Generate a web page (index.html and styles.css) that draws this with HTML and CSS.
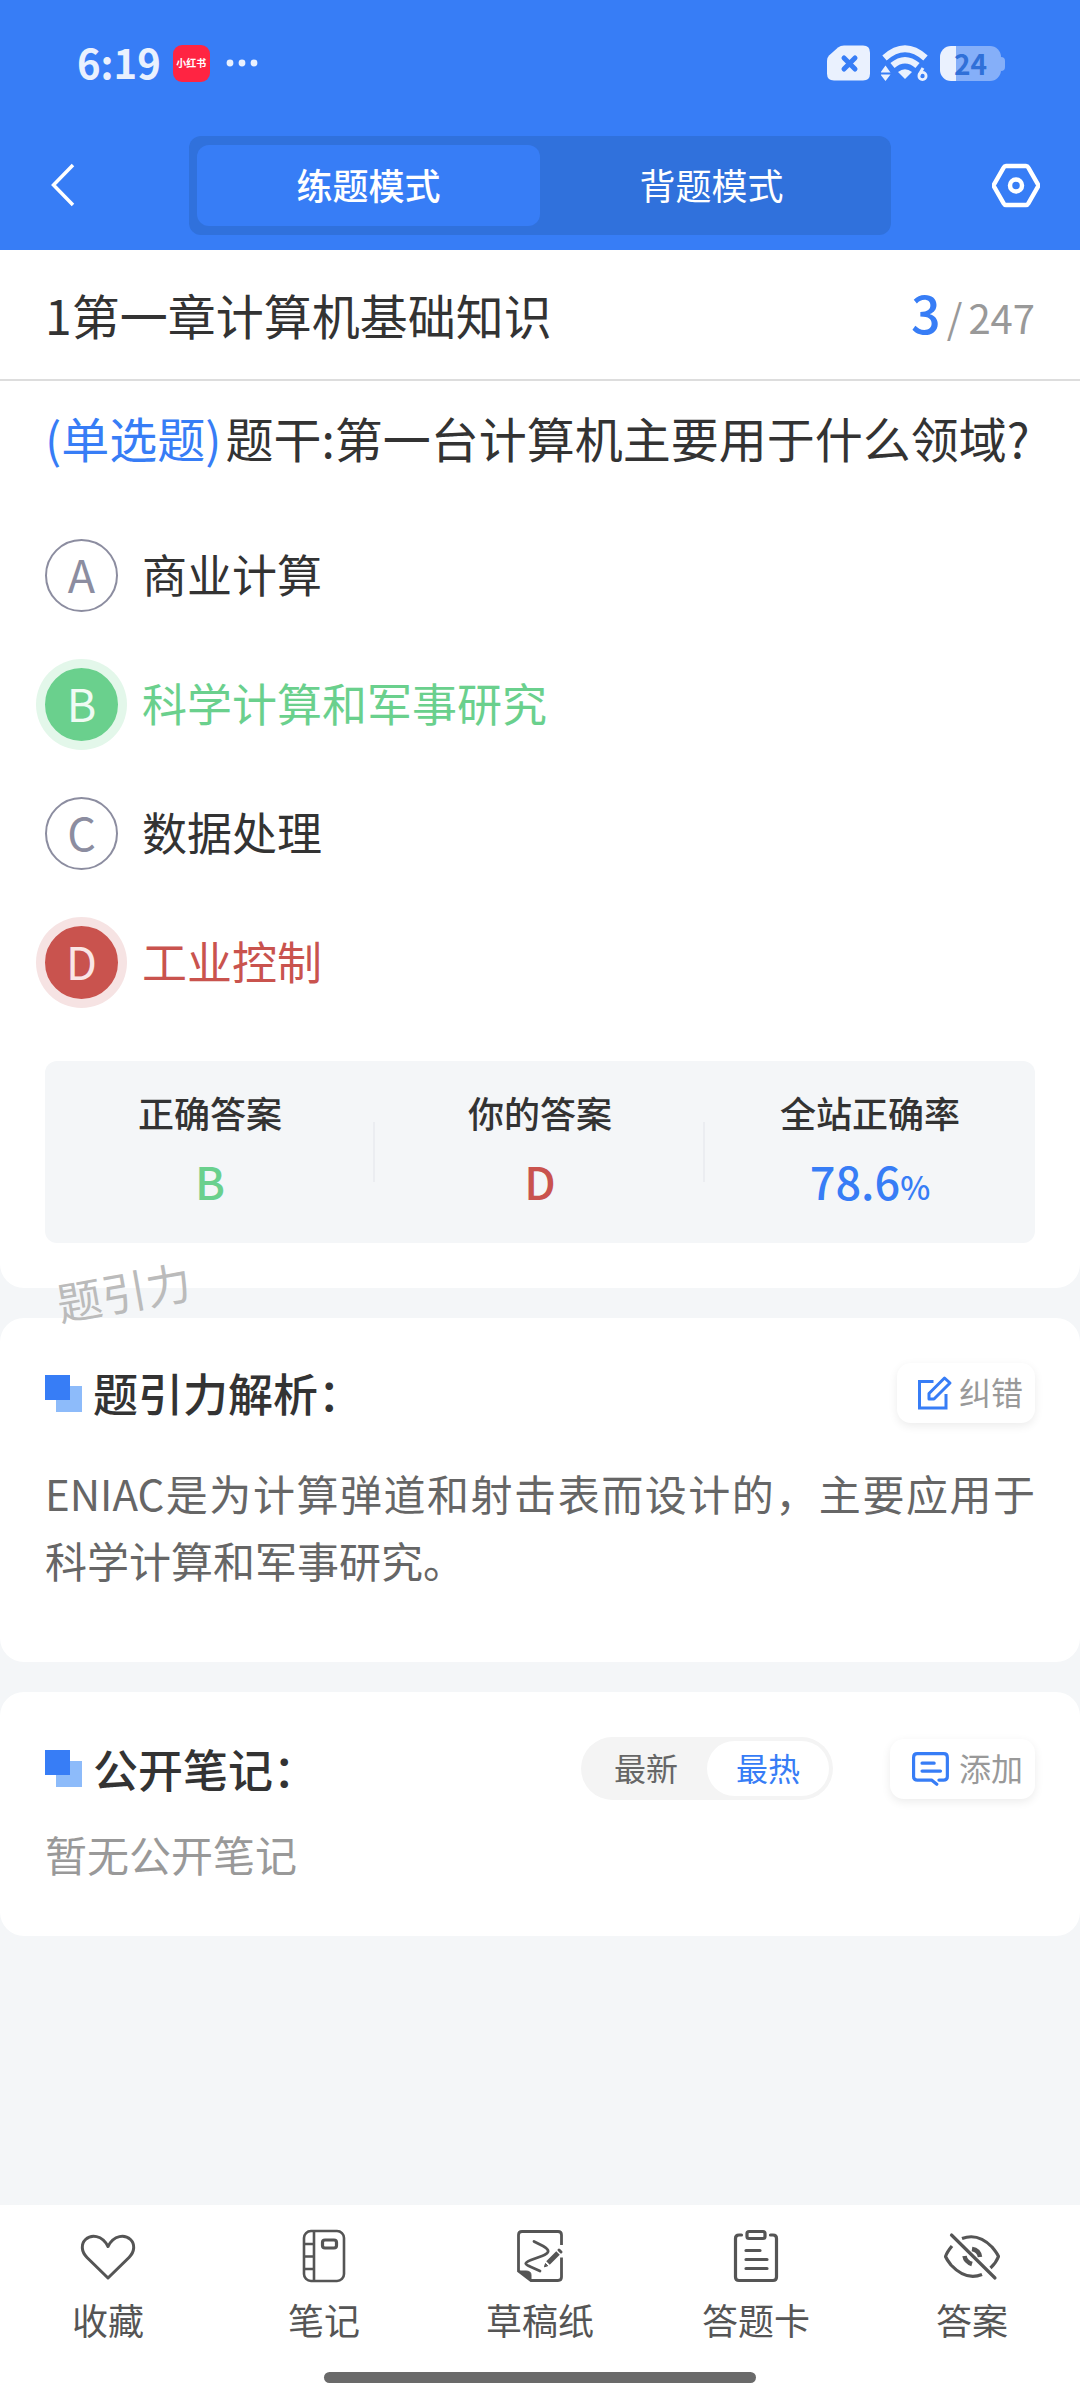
FILE: index.html
```html
<!DOCTYPE html>
<html lang="zh-CN">
<head>
  <meta charset="UTF-8">
  <meta name="viewport" content="width=device-width, initial-scale=1">
  <title>练题模式</title>
  <link rel="stylesheet" href="styles.css">
</head>
<body>
  <header class="header">
    <div class="status-bar">
      <div class="status-left">
        <span class="clock">6:19</span>
        <span class="app-badge">小红书</span>
        <svg class="dots" width="32" height="8" viewBox="0 0 32 8" fill="#eaf1fe">
          <circle cx="4" cy="4" r="3.4"/><circle cx="16" cy="4" r="3.4"/><circle cx="28" cy="4" r="3.4"/>
        </svg>
      </div>
      <div class="status-right">
        <!-- no sim -->
        <svg width="43" height="36" viewBox="0 0 43 36">
          <path d="M11 2.500Q13.500 0.500 17 0.500H36Q43 0.500 43 7.500V28.500Q43 35.500 36 35.500H7Q0 35.500 0 28.500V16Q0 12.500 2 10.500Z" fill="#eaf1fe"/>
          <path d="M17 13l11 11M28 13l-11 11" stroke="#377df6" stroke-width="5" stroke-linecap="round"/>
        </svg>
        <!-- wifi 6 -->
        <svg width="48" height="38" viewBox="0 0 48 38">
          <g fill="none" stroke="#eaf1fe" stroke-width="6.500">
            <path d="M3.500 14Q24 -4.500 44.500 14"/>
            <path d="M11.500 21.500Q24 11 36.500 21.500"/>
          </g>
          <path d="M17 28Q24 22.500 31 28L24 35Z" fill="#eaf1fe"/>
          <path d="M4.500 21.500l5 7h-10zM4.500 37l-5-6.500h10z" fill="#eaf1fe"/>
          <circle cx="41.500" cy="32" r="3.600" fill="none" stroke="#eaf1fe" stroke-width="2.800"/>
          <path d="M38 31l4-7" stroke="#eaf1fe" stroke-width="3"/>
        </svg>
        <div class="battery"><span class="battery-text">24</span></div>
      </div>
    </div>

    <nav class="top-nav">
      <button class="icon-btn back" aria-label="返回">
        <svg width="36" height="46" viewBox="0 0 36 46" fill="none" stroke="#fff" stroke-width="3.500">
          <path d="M28 2L8.500 22L28 42"/>
        </svg>
      </button>
      <div class="mode-tabs">
        <button class="mode-tab active">练题模式</button>
        <button class="mode-tab">背题模式</button>
      </div>
      <button class="icon-btn settings" aria-label="设置">
        <svg width="48" height="46" viewBox="0 0 48 46" fill="none" stroke="#fff">
          <path d="M14 3H34Q35.500 3 36.300 4.500L46 21.500Q46.500 22.500 46 23.500L36.300 40.500Q35.500 42 34 42H14Q12.500 42 11.700 40.500L2 23.500Q1.500 22.500 2 21.500L11.700 4.500Q12.500 3 14 3Z" stroke-width="4.500"/>
          <circle cx="24" cy="22.500" r="6" stroke-width="4.500"/>
        </svg>
      </button>
    </nav>
  </header>

  <main>
    <section class="card card-first">
      <div class="chapter">
        <h1>1第一章计算机基础知识</h1>
        <p class="counter"><b>3</b><span>/</span><span>247</span></p>
      </div>

      <form class="question">
        <p class="stem"><span class="type">(单选题)</span>题干:第一台计算机主要用于什么领域?</p>

        <div class="options">
          <label class="option"><input type="radio" name="answer" value="A"><span class="letter">A</span><span class="option-text">商业计算</span></label>
          <label class="option right"><input type="radio" name="answer" value="B"><span class="letter">B</span><span class="option-text">科学计算和军事研究</span></label>
          <label class="option"><input type="radio" name="answer" value="C"><span class="letter">C</span><span class="option-text">数据处理</span></label>
          <label class="option wrong"><input type="radio" name="answer" value="D" checked><span class="letter">D</span><span class="option-text">工业控制</span></label>
        </div>

        <dl class="stats">
          <div class="stat"><dt>正确答案</dt><dd class="green">B</dd></div>
          <div class="stat"><dt>你的答案</dt><dd class="red">D</dd></div>
          <div class="stat"><dt>全站正确率</dt><dd class="blue">78.6<small>%</small></dd></div>
        </dl>
      </form>
      <span class="watermark">题引力</span>
    </section>

    <section class="card analysis">
      <div class="card-head">
        <h2><span class="mark"></span>题引力解析：</h2>
        <button class="action-btn">
          <svg width="36" height="36" viewBox="0 0 36 36" fill="none" stroke="#377df6" stroke-width="3">
            <path d="M16.500 6.500H2.500V33H29V19"/>
            <path d="M27.500 3L33 8L17 24H12V18.500Z" stroke-linejoin="round"/>
          </svg>
          <span>纠错</span>
        </button>
      </div>
      <p class="analysis-text">ENIAC是为计算弹道和射击表而设计的，主要应用于科学计算和军事研究。</p>
    </section>

    <section class="card notes">
      <div class="card-head">
        <h2><span class="mark"></span>公开笔记：</h2>
        <div class="head-right">
          <div class="sort">
            <button>最新</button>
            <button class="active">最热</button>
          </div>
          <button class="action-btn add">
            <svg width="38" height="38" viewBox="0 0 36 36" fill="none" stroke="#377df6" stroke-width="3" stroke-linecap="round" stroke-linejoin="round">
              <path d="M25.500 28.500H30Q33.500 28.500 33.500 25V7Q33.500 3.500 30 3.500H5Q1.500 3.500 1.500 7V25Q1.500 28.500 5 28.500H18.500L23.500 32.500"/>
              <path d="M9.500 12.500H21M9.500 20H27"/>
            </svg>
            <span>添加</span>
          </button>
        </div>
      </div>
      <p class="empty">暂无公开笔记</p>
    </section>
  </main>

  <footer class="toolbar">
    <div class="tools">
      <button class="tool">
        <svg width="56" height="56" viewBox="0 0 56 56" fill="none" stroke="#555" stroke-width="3" stroke-linejoin="round">
          <path d="M28 50L7 29.500C1 23.500 1 16 5.500 11.500C11 6.500 22 6.500 28 18.500C34 6.500 45 6.500 50.500 11.500C55 16 55 23.500 49 29.500Z"/>
        </svg>
        收藏
      </button>
      <button class="tool">
        <svg width="56" height="56" viewBox="0 0 56 56" fill="none" stroke="#555" stroke-width="2.600">
          <rect x="8" y="3" width="40" height="50" rx="7"/>
          <path d="M18 3V53M8 16H18M8 28.500H18M8 41H18"/>
          <rect x="26.500" y="12" width="14" height="8" rx="2.500" stroke-width="3.200"/>
        </svg>
        笔记
      </button>
      <button class="tool">
        <svg width="56" height="56" viewBox="0 0 56 56" fill="none" stroke="#555" stroke-width="2.800" stroke-linecap="round">
          <path d="M49.500 17V7Q49.500 3.500 46 3.500H10Q6.500 3.500 6.500 7V43L19 52.500H46Q49.500 52.500 49.500 49V29.500" stroke-linecap="butt"/>
          <path d="M6.500 43H14Q19 43 19 47V52.500Z" fill="#555" stroke-width="1"/>
          <path d="M22 13.500L31 18C38 22 38 25 30 28L19 32C12 35 12 36 19 39L28 43"/>
          <path d="M36 35L46 25" stroke-width="5" stroke-linecap="butt"/>
          <path d="M47 22l2 2" stroke-width="3"/>
          <path d="M32.500 38.500l1-3 2 2z" fill="#555" stroke-width="1"/>
        </svg>
        草稿纸
      </button>
      <button class="tool">
        <svg width="56" height="56" viewBox="0 0 56 56" fill="none" stroke="#555" stroke-width="3.200" stroke-linecap="round">
          <path d="M13.500 7H11Q7.500 7 7.500 10.500V49Q7.500 52.500 11 52.500H45Q48.500 52.500 48.500 49V10.500Q48.500 7 45 7H42.500"/>
          <rect x="19" y="3.500" width="18" height="7" rx="2"/>
          <path d="M18 22.500H32M18 31.500H39M18 40.500H39"/>
        </svg>
        答题卡
      </button>
      <button class="tool">
        <svg width="56" height="56" viewBox="0 0 56 56" fill="none" stroke="#555" stroke-width="3.200" stroke-linecap="round">
          <path d="M8 18Q3 24 1.500 28.500Q3 32 7 37Q22 53 38 46.500" stroke-linecap="butt"/>
          <path d="M18 10.500Q34 4.500 48 19Q53 25 54.500 28.500Q52 35 46.500 40" stroke-linecap="butt"/>
          <path d="M20.500 28Q21.500 34 28 36M28 21Q35 22 36 29" stroke-width="4.500" stroke-linecap="butt"/>
          <path d="M7.500 7L51 50"/>
        </svg>
        答案
      </button>
    </div>
    <div class="home-bar"></div>
  </footer>
</body>
</html>
```
FILE: styles.css
```css
* {
  box-sizing: border-box;
}

body {
  margin: 0;
  min-height: 100vh;
  display: flex;
  flex-direction: column;
  background-color: #f4f6f8;
  color: #333;
  font-family: "Noto Sans CJK SC", "Noto Sans", sans-serif;
}

h1, h2, p, dl, dd {
  margin: 0;
}

button {
  padding: 0;
  border: none;
  background: none;
  font-family: inherit;
  cursor: pointer;
}

svg {
  display: block;
  flex-shrink: 0;
}

/* header */
.header {
  background-color: #377df6;
  color: #fff;
}

.status-bar {
  height: 126px;
  padding: 0 79px 0 77px;
  display: flex;
  align-items: center;
  justify-content: space-between;
}

.status-left {
  display: flex;
  align-items: center;
  gap: 12px;
}

.dots {
  margin-left: 4px;
}

.status-right {
  display: flex;
  align-items: center;
  gap: 11px;
}

.clock {
  padding-bottom: 2px;
  font-size: 40px;
  font-weight: 700;
  line-height: 60px;
  color: #eaf1fe;
}

.app-badge {
  width: 37px;
  height: 37px;
  border-radius: 9px;
  background-color: #ff2442;
  font-size: 10px;
  font-weight: 700;
  line-height: 36px;
  text-align: center;
}

.battery {
  width: 61px;
  height: 35px;
  border-radius: 11px;
  background: linear-gradient(to right, #eaf1fe 16px, #85aff9 16px);
  display: flex;
  justify-content: center;
  position: relative;
}

.battery::after {
  content: "";
  position: absolute;
  left: 100%;
  top: 11px;
  width: 4px;
  height: 14px;
  border-radius: 0 4px 4px 0;
  background-color: #85aff9;
}

.battery-text {
  font-size: 28px;
  font-weight: 700;
  line-height: 34px;
  color: #3070d8;
}

.top-nav {
  display: grid;
  grid-template-columns: 1fr 65% 1fr;
  align-items: center;
  padding: 10px 0 15px;
}

.back {
  justify-self: start;
  padding-left: 45px;
}

.settings {
  justify-self: end;
  padding-right: 40px;
}

.mode-tabs {
  display: flex;
  padding: 9px 8px;
  border-radius: 12px;
  background-color: #3071dc;
}

.mode-tab {
  flex: 1;
  height: 81px;
  padding-bottom: 4px;
  border-radius: 12px;
  color: #fff;
  font-size: 36px;
}

.mode-tab.active {
  background-color: #377df6;
  font-weight: 500;
}

/* cards */
.card {
  margin-bottom: 30px;
  padding: 45px;
  border-radius: 24px;
  background-color: #fff;
}

.card-first {
  position: relative;
  padding: 0 0 45px;
  border-radius: 0 0 24px 24px;
}

.chapter {
  display: flex;
  align-items: center;
  justify-content: space-between;
  padding: 28px 45px 29px;
  border-bottom: 2px solid #ddd;
}

.chapter h1 {
  font-size: 48px;
  font-weight: 400;
  line-height: 72px;
}

.counter {
  display: flex;
  align-items: baseline;
  gap: 6px;
  font-size: 40px;
  line-height: 60px;
  color: #999;
}

.counter b {
  font-size: 52px;
  font-weight: 500;
  color: #377df6;
}

.question {
  padding: 22px 45px 0;
}

.stem {
  font-size: 48px;
  line-height: 68px;
}

.type {
  margin-right: 4px;
  color: #377df6;
}

.options {
  display: flex;
  flex-direction: column;
  align-items: flex-start;
  gap: 56px;
  margin: 68px 0 62px;
}

.option {
  display: flex;
  align-items: center;
  font-size: 45px;
  line-height: 69px;
  cursor: pointer;
}

.option input {
  appearance: none;
  width: 0;
  height: 0;
  margin: 0;
}

.option-text {
  padding-bottom: 4px;
}

.letter {
  display: flex;
  align-items: center;
  justify-content: center;
  width: 73px;
  height: 73px;
  margin-right: 24px;
  padding-bottom: 4px;
  border: 2px solid #8c8da0;
  border-radius: 50%;
  color: #8c8da0;
}

.right,
.green {
  color: #6ad08d;
}

.wrong,
.red {
  color: #c9534e;
}

.blue {
  color: #377df6;
}

.right .letter {
  border-color: #6ad08d;
  background-color: #6ad08d;
  box-shadow: 0 0 0 9px #e3f7ea;
  color: #effbf3;
}

.wrong .letter {
  border-color: #c9534e;
  background-color: #c9534e;
  box-shadow: 0 0 0 9px #f6e3e3;
  color: #fae6e6;
}

.stats {
  display: flex;
  border-radius: 12px;
  background-color: #f4f6f8;
  text-align: center;
}

.stat {
  flex: 1;
  padding: 24px 0 29px;
  background: linear-gradient(#ebedf1, #ebedf1) right center / 2px 60px no-repeat;
}

.stat:last-child {
  background: none;
}

.stat dt {
  margin-bottom: 9px;
  font-size: 36px;
  font-weight: 500;
  line-height: 54px;
}

.stat dd {
  font-size: 45px;
  font-weight: 500;
  line-height: 66px;
}

.stat small {
  font-size: 32px;
  line-height: 32px;
}

.watermark {
  position: absolute;
  left: 56px;
  bottom: -35px;
  font-size: 45px;
  line-height: 64px;
  color: #bbb;
  transform: rotate(-10deg);
}

.card-head {
  display: flex;
  align-items: center;
  justify-content: space-between;
}

.card-head h2 {
  display: flex;
  align-items: center;
  gap: 11px;
  font-size: 45px;
  font-weight: 500;
  line-height: 60px;
}

/* two overlapping squares */
.mark {
  width: 37px;
  height: 37px;
  background:
    linear-gradient(#377df6, #377df6) left top / 25px 25px no-repeat,
    linear-gradient(#8dbbfa, #8dbbfa) right bottom / 26px 26px no-repeat;
}

.head-right {
  display: flex;
  align-items: center;
  gap: 57px;
}

.action-btn {
  display: flex;
  align-items: center;
  gap: 6px;
  height: 60px;
  padding: 0 12px 0 20px;
  border-radius: 14px;
  box-shadow: 0 3px 10px rgba(0, 0, 0, 0.08);
  font-size: 32px;
  color: #999;
}

.action-btn span {
  padding-bottom: 4px;
}

.add {
  gap: 9px;
  padding-left: 22px;
}

.sort {
  display: flex;
  padding: 4px;
  border-radius: 32px;
  background-color: #f4f4f4;
}

.sort button {
  width: 122px;
  height: 55px;
  padding-bottom: 4px;
  border-radius: 28px;
  font-size: 32px;
  color: #666;
}

.sort .active {
  background-color: #fff;
  color: #377df6;
}

.analysis {
  padding-bottom: 69px;
}

.analysis-text {
  margin-top: 36px;
  font-size: 42px;
  line-height: 67px;
  color: #666;
  text-align: justify;
}

.notes {
  padding-bottom: 49px;
}

.empty {
  margin-top: 20px;
  font-size: 42px;
  line-height: 67px;
  color: #999;
}

/* bottom toolbar */
.toolbar {
  position: sticky;
  bottom: 0;
  margin-top: auto;
  padding: 23px 0 17px;
  background-color: #fff;
}

.tools {
  display: flex;
}

.tool {
  flex: 1;
  display: flex;
  flex-direction: column;
  align-items: center;
  gap: 8px;
  font-size: 36px;
  line-height: 54px;
  color: #555;
}

.home-bar {
  width: 40%;
  height: 11px;
  margin: 26px auto 0;
  border-radius: 6px;
  background-color: #6a6a6a;
}
```
